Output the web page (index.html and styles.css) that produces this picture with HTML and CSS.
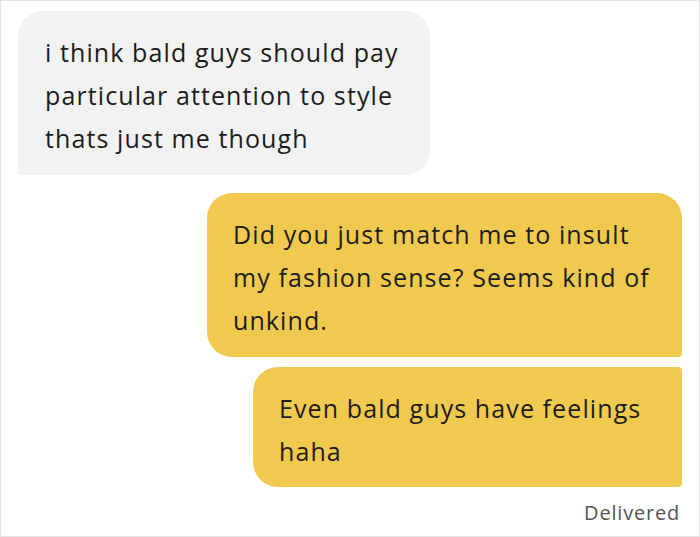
FILE: index.html
```html
<!DOCTYPE html>
<html lang="en">
<head>
<meta charset="utf-8">
<title>Chat</title>
<link rel="stylesheet" href="styles.css">
</head>
<body>
<main class="chat">
  <div class="bubble bubble-in">i think bald guys should pay<br>particular attention to style<br>thats just me though</div>
  <div class="bubble bubble-out first">Did you just match me to insult<br>my fashion sense? Seems kind of<br>unkind.</div>
  <div class="bubble bubble-out second">Even bald guys have feelings<br>haha</div>
  <div class="status">Delivered</div>
</main>
</body>
</html>
```
FILE: styles.css
```css
* { box-sizing: border-box; }
html, body { margin: 0; padding: 0; background: #fff; }
.chat {
  width: 700px;
  height: 537px;
  border: 1px solid #e4e4e4;
  display: flex;
  flex-direction: column;
  padding: 10px 17px 0 17px;
  font-family: "Open Sans", "Lato", sans-serif;
  color: #1c1c1c;
  overflow: hidden;
}
.bubble {
  font-size: 25px;
  line-height: 43px;
  letter-spacing: 1.1px;
  white-space: nowrap;
  padding: 20px 20px 15px 26px;
}
.bubble-in {
  align-self: flex-start;
  width: 412px;
  height: 164px;
  background: #f2f2f2;
  border-radius: 25px 25px 25px 4px;
  padding-left: 27px;
}
.bubble-out {
  align-self: flex-end;
  background: #f2c94f;
}
.first {
  margin-top: 18px;
  width: 475px;
  height: 164px;
  border-radius: 25px 25px 4px 25px;
}
.second {
  margin-top: 10px;
  width: 429px;
  height: 120px;
  border-radius: 25px 4px 4px 25px;
}
.status {
  align-self: flex-end;
  margin-top: 13px;
  margin-right: 2px;
  font-size: 20px;
  line-height: 26px;
  letter-spacing: 0.8px;
  color: #555;
}
```
